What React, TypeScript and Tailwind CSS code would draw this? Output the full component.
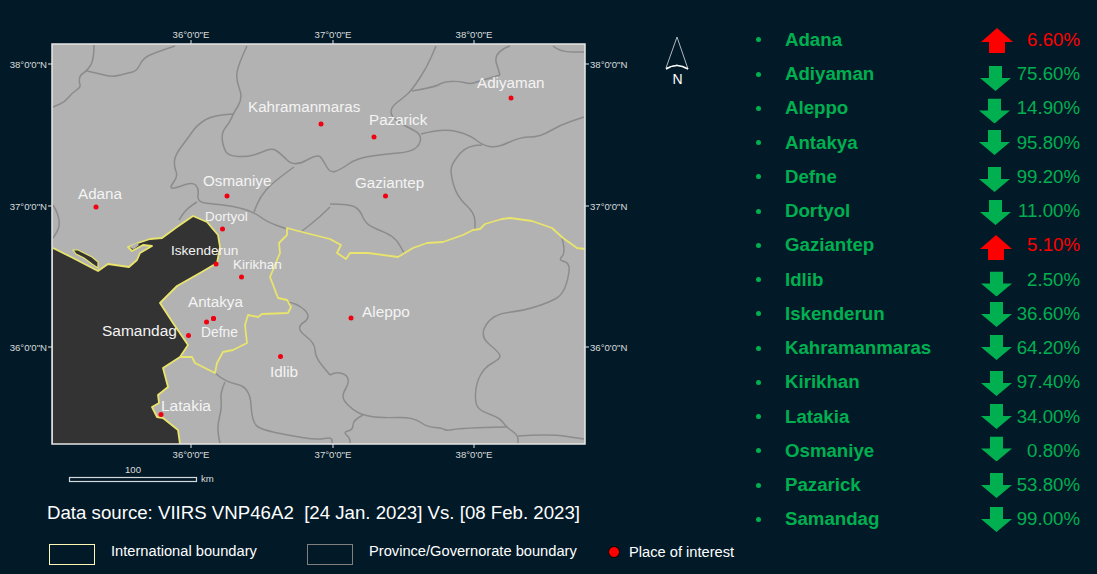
const rows = [
  { name: "Adana", pct: "6.60%", up: true, dx: 1, dy: 1 },
  { name: "Adiyaman", pct: "75.60%", up: false, dx: 0, dy: 4 },
  { name: "Aleppo", pct: "14.90%", up: false, dx: -1, dy: 2.5 },
  { name: "Antakya", pct: "95.80%", up: false, dx: -1, dy: 0 },
  { name: "Defne", pct: "99.20%", up: false, dx: -1, dy: 3 },
  { name: "Dortyol", pct: "11.00%", up: false, dx: 0, dy: 1 },
  { name: "Gaziantep", pct: "5.10%", up: true, dx: 0, dy: 2 },
  { name: "Idlib", pct: "2.50%", up: false, dx: 1, dy: 4.5 },
  { name: "Iskenderun", pct: "36.60%", up: false, dx: 1, dy: 1 },
  { name: "Kahramanmaras", pct: "64.20%", up: false, dx: 1, dy: -1 },
  { name: "Kirikhan", pct: "97.40%", up: false, dx: 1, dy: 1 },
  { name: "Latakia", pct: "34.00%", up: false, dx: 1, dy: 0 },
  { name: "Osmaniye", pct: "0.80%", up: false, dx: 1, dy: -1.5 },
  { name: "Pazarick", pct: "53.80%", up: false, dx: 1, dy: 0 },
  { name: "Samandag", pct: "99.00%", up: false, dx: 1, dy: 0 },
];

// province lines, page coordinates
const provinces = [
  "94,45 94,60 87,71 80,75 79,82 81,87 72,93 65,102 53,107",
  "87,71 100,74 113,77 128,73 137,71 143,58 157,52 175,46",
  "247,46 238,65 236,80 243,98 233,114 230,122 221,133 224,150 230,156 247,157 260,153 272,148 280,153 294,167 318,154 323,160 330,173 340,170 357,158 387,154 410,152 420,145 421,134 407,127 391,117 391,107 403,98 412,90 427,67 436,46",
  "233,114 213,115 197,125 188,138 175,155 174,167 178,176 170,187 173,189 192,182 199,188 197,202 213,204 233,206 254,212 267,222 287,229",
  "294,167 273,182 260,197 254,212",
  "197,202 187,208 179,220",
  "53,205 58,213 60,227 53,238",
  "330,207 320,217 302,231",
  "412,91 435,87 443,82 458,81 470,84 477,82 500,75",
  "510,46 493,52 500,75",
  "553,46 560,52 584,52",
  "421,134 443,128 470,135 482,145 497,148 520,137 540,137 560,125 584,117",
  "482,145 467,145 453,162 450,172 457,197 475,213 475,230",
  "330,204 350,204 360,210 366,225 387,233 397,240 404,253",
  "562,238 566,253 558,260 570,263 568,280 562,295 550,302 523,311 493,314 479,336 500,353 500,359 485,367 476,383 475,405 483,412 500,418 506,427 518,435 518,444",
  "518,436 550,434 584,439",
  "506,427 460,428 447,431 442,428 427,427 413,417 380,418 363,415 353,410 343,400 343,393 349,383 347,375 337,372 330,375",
  "363,415 353,420 353,430 343,432 350,438 350,444",
  "287,302 297,303 312,317 295,328 315,343 315,357 330,375",
  "215,373 225,382 250,387 252,423 263,430 287,435 317,440 332,437 332,444",
  "225,382 220,393 222,407 217,427 220,444",
];

const coast =
  "53,248 73,258 98,271 108,264 129,267 137,260 140,253 152,246 143,245 132,251 128,247 138,243 150,239 162,238 177,227 193,216 207,222 218,235 220,247 217,263 200,273 177,286 160,303 173,323 188,345 180,357 163,368 168,387 158,395 159,403 152,407 157,417 163,418 178,430 180,444";

const border =
  "585,249 577,248 563,238 552,228 532,221 510,218 502,219 485,224 480,229 473,230 463,235 443,242 427,243 413,248 398,257 368,253 350,253 346,259 337,253 341,245 330,239 302,232 287,228 287,235 279,243 280,253 270,277 278,298 287,300 291,307 288,313 262,314 258,317 248,315 245,325 247,343 233,350 223,352 217,363 215,373 195,363 192,357 180,357";

const island = "73,250 78,250 84,253 92,257 98,262 98,268 92,264 84,258 76,254";

const places: [string, number, number, number, number, number][] = [
  ["Adana", 78, 199, 15.2, 96, 207],
  ["Osmaniye", 203, 186, 15.2, 227, 196],
  ["Kahramanmaras", 248, 112, 15.2, 321, 124],
  ["Adiyaman", 477, 88, 15.2, 511, 98],
  ["Pazarick", 369, 125, 15.2, 374, 137],
  ["Gaziantep", 355, 188, 15.2, 385.5, 196],
  ["Dortyol", 205, 221, 13.5, 222.5, 229],
  ["Iskenderun", 171, 255, 13.6, 216, 264],
  ["Kirikhan", 233, 269, 13.5, 241.5, 277],
  ["Antakya", 188, 307, 15.2, 213.5, 318.5],
  ["Defne", 201, 337, 13.8, 206.5, 322],
  ["Samandag", 102, 336, 15.5, 188.5, 335.5],
  ["Idlib", 270, 377, 15.3, 280.5, 356.5],
  ["Aleppo", 362, 317, 15.4, 351, 318],
  ["Latakia", 161, 411, 15.5, 161, 414.5],
];

function smooth(points: string) {
  const p = points.split(" ").map((s) => s.split(",").map(Number));
  let d = `M${p[0][0]} ${p[0][1]}`;
  for (let i = 1; i < p.length - 1; i++) {
    const mx = (p[i][0] + p[i + 1][0]) / 2;
    const my = (p[i][1] + p[i + 1][1]) / 2;
    d += ` Q${p[i][0]} ${p[i][1]} ${mx} ${my}`;
  }
  const last = p[p.length - 1];
  return d + ` L${last[0]} ${last[1]}`;
}

function MapFigure() {
  return (
    <svg viewBox="0 0 750 490" className="block h-[490px] w-[750px]" fontFamily="'Liberation Sans', Arial, sans-serif">
      <rect x="52" y="44" width="533" height="400" fill="#b2b2b2" />
      {provinces.map((p) => (
        <path key={p} d={smooth(p)} fill="none" stroke="#8c8c8c" strokeWidth="1.5" />
      ))}
      <polygon points={`${coast} 53,444`} fill="#333333" />
      <polyline points={coast} fill="none" stroke="#e8e46c" strokeWidth="1.8" strokeLinejoin="round" />
      <polygon points={island} fill="#333333" stroke="#e8e46c" strokeWidth="1.2" />
      <polygon points="130,248 134,249 139,245 137,243 131,246" fill="#b2b2b2" />
      <polyline points={border} fill="none" stroke="#e8e46c" strokeWidth="1.8" strokeLinejoin="round" />
      <rect x="52" y="44" width="533" height="400" fill="none" stroke="#e6e6e6" strokeWidth="1.5" />

      {[191, 333, 474].map((x, i) => (
        <g key={x} fill="#dcdcdc" stroke="none" fontSize="9.6">
          <line x1={x} x2={x} y1="40" y2="44" stroke="#e6e6e6" />
          <line x1={x} x2={x} y1="444" y2="448" stroke="#e6e6e6" />
          <text x={x} y="38" textAnchor="middle">{`${36 + i}°0'0"E`}</text>
          <text x={x} y="458" textAnchor="middle">{`${36 + i}°0'0"E`}</text>
        </g>
      ))}
      {[64, 206, 347].map((y, i) => (
        <g key={y} fill="#dcdcdc" fontSize="9.6">
          <line x1="48" x2="52" y1={y} y2={y} stroke="#e6e6e6" />
          <line x1="585" x2="589" y1={y} y2={y} stroke="#e6e6e6" />
          <text x="47" y={y + 3.5} textAnchor="end">{`${38 - i}°0'0"N`}</text>
          <text x="590" y={y + 3.5}>{`${38 - i}°0'0"N`}</text>
        </g>
      ))}

      {places.map(([name, x, y, size, cx, cy]) => (
        <g key={name}>
          <circle cx={cx} cy={cy} r="2.5" fill="#f00010" />
          <text x={x} y={y} fontSize={size} fill="#f4f4f4">{name}</text>
        </g>
      ))}
      <circle cx="213.5" cy="318.5" r="2.5" fill="#f00010" />

      <polygon points="677,37 666,68 677,65 688,69" fill="none" stroke="#c4c8cc" strokeWidth="0.9" />
      <path d="M666 69 Q677 62 688 69" fill="none" stroke="#ffffff" strokeWidth="1.6" />
      <text x="677.5" y="83.5" textAnchor="middle" fontSize="14" fill="#ffffff">N</text>

      <rect x="69.5" y="477.5" width="127" height="4" fill="none" stroke="#d4d8da" strokeWidth="1.2" />
      <text x="133" y="473" textAnchor="middle" fontSize="9.6" fill="#dcdcdc">100</text>
      <text x="201" y="482" fontSize="9.6" fill="#dcdcdc">km</text>
    </svg>
  );
}

function Arrow({ up, dx, dy }: { up: boolean; dx: number; dy: number }) {
  return (
    <svg
      width="32"
      height="25"
      viewBox="0 0 32 25"
      className="shrink-0"
      style={{ transform: `translate(${dx}px, ${dy}px)` }}
    >
      {up ? (
        <polygon points="16,0 32,14 24,14 24,25 8,25 8,14 0,14" fill="#ff0000" />
      ) : (
        <polygon points="9,0 22,0 22,12 31,12 15.5,25 0,12 9,12" fill="#00b050" />
      )}
    </svg>
  );
}

export default function App() {
  return (
    <div className="flex h-[574px] w-[1097px] overflow-hidden bg-[#021a28] font-['Liberation_Sans',Arial,sans-serif]">
      <div className="w-[750px] shrink-0">
        <MapFigure />
        <p className="mt-[12px] whitespace-pre pl-[47px] text-[18.67px] leading-[22px] text-white">
          {"Data source: VIIRS VNP46A2  [24 Jan. 2023] Vs. [08 Feb. 2023]"}
        </p>
        <div className="mt-[20px] flex items-start pl-[49px] text-[14.67px] leading-[16px] text-white">
          <span className="h-[21px] w-[46px] border border-[#fdf7b4]" />
          <span className="-mt-px ml-[16px] w-[196px]">International boundary</span>
          <span className="h-[21px] w-[46px] border border-[#7f7f7f]" />
          <span className="-mt-px ml-[16px] w-[239px]">Province/Governorate boundary</span>
          <span className="mt-[2px] h-[12px] w-[12px] rounded-full border border-black bg-[#ff0000]" />
          <span className="ml-[9px]">Place of interest</span>
        </div>
      </div>
      <ul className="flex-1 pt-[22.7px] pr-[17px]">
        {rows.map((r) => (
          <li key={r.name} className="flex h-[34.25px] items-center text-[18.67px] text-[#00b050]">
            <span className="ml-[6px] h-[5px] w-[5px] shrink-0 rounded-full bg-[#00b050]" />
            <span className="ml-[24px] w-[195px] shrink-0 font-bold">{r.name}</span>
            <Arrow up={r.up} dx={r.dx} dy={r.dy} />
            <span className={r.up ? "flex-1 text-right text-[#ff0000]" : "flex-1 text-right"}>{r.pct}</span>
          </li>
        ))}
      </ul>
    </div>
  );
}
